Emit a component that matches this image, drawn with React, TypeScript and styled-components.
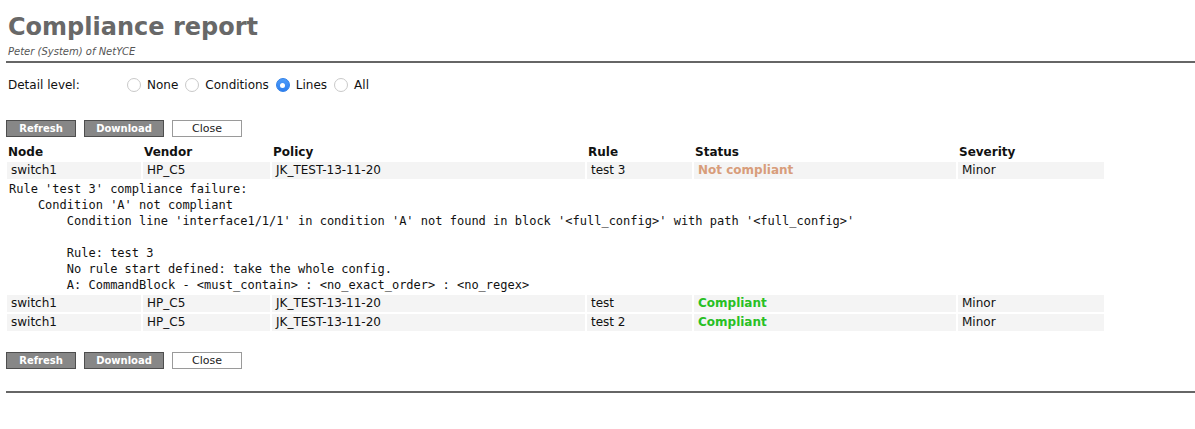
import styled, { createGlobalStyle } from "styled-components";

const GlobalStyle = createGlobalStyle`
    body {
        margin: 0;
        background: #ffffff;
        font-family: Verdana, "DejaVu Sans", sans-serif;
        color: #111;
    }
`

const Page = styled.div`
    padding: 0 0 0 6px;
`

const Title = styled.h1`
    margin: 0;
    padding: 13px 0 0 2px;
    font-size: 24px;
    line-height: 29px;
    font-weight: bold;
    color: #686868;
`

const Subtitle = styled.div`
    padding: 3px 0 0 2px;
    font-size: 10px;
    line-height: 13px;
    font-style: italic;
    color: #555;
`

const Rule = styled.hr`
    margin: 3px 0 0;
    border: none;
    height: 2px;
    background: #666;
`

const DetailRow = styled.div`
    display: flex;
    align-items: center;
    margin-top: 14px;
    padding-left: 2px;
    font-size: 12px;
    height: 16px;
`

const DetailLabel = styled.span`
    width: 119px;
`

const RadioItem = styled.label`
    display: flex;
    align-items: center;
    gap: 6px;
    margin-right: 7px;
`

const Radio = styled.span<{ $checked?: boolean }>`
    box-sizing: border-box;
    width: 14px;
    height: 14px;
    border-radius: 50%;
    border: 1px solid ${p => (p.$checked ? "#2f7fe8" : "#c9c9c9")};
    background: ${p => (p.$checked ? "linear-gradient(#4d9bf8, #2d7ff0)" : "#fff")};
    display: flex;
    align-items: center;
    justify-content: center;

    &::after {
        content: "";
        width: 5px;
        height: 5px;
        border-radius: 50%;
        background: ${p => (p.$checked ? "#fff" : "transparent")};
    }
`

const Buttons = styled.div<{ $top: number }>`
    display: flex;
    gap: 8px;
    margin-top: ${p => p.$top}px;
`

const Button = styled.button<{ $primary?: boolean; $width: number }>`
    box-sizing: border-box;
    width: ${p => p.$width}px;
    height: 17px;
    padding: 0;
    font-family: Verdana, "DejaVu Sans", sans-serif;
    font-size: ${p => (p.$primary ? "10px" : "11px")};
    line-height: 15px;
    font-weight: ${p => (p.$primary ? "bold" : "normal")};
    color: ${p => (p.$primary ? "#fff" : "#222")};
    background: ${p => (p.$primary ? "#878787" : "#fff")};
    border: 1px solid ${p => (p.$primary ? "#4e4e4e" : "#9a9a9a")};
    border-radius: 0;
`

const Table = styled.table`
    border-collapse: separate;
    border-spacing: 2px;
    table-layout: fixed;
    width: 1101px;
    margin: 5px 0 0 -1px;
    font-size: 12px;
`

const Th = styled.th`
    text-align: left;
    font-weight: bold;
    padding: 0 1px;
    height: 16px;
    line-height: 16px;
`

const Td = styled.td<{ $status?: "ok" | "fail" }>`
    background: #f4f4f4;
    padding: 0 4px;
    height: 17px;
    line-height: 17px;
    white-space: nowrap;
    font-weight: ${p => (p.$status ? "bold" : "normal")};
    color: ${p => (p.$status === "ok" ? "#27c024" : p.$status === "fail" ? "#d89d7b" : "#111")};
`

const DetailCell = styled.td`
    padding: 0 2px;
`

const Pre = styled.pre`
    margin: 0;
    font-family: "DejaVu Sans Mono", Menlo, monospace;
    font-size: 12px;
    line-height: 16px;
    color: #111;
`

const BottomRule = styled.hr`
    margin: 22px 0 0;
    border: none;
    height: 2px;
    background: #666;
`

type Row = {
    node: string
    vendor: string
    policy: string
    rule: string
    compliant: boolean
    severity: string
    detail?: string
}

const rows: Row[] = [
    {
        node: "switch1", vendor: "HP_C5", policy: "JK_TEST-13-11-20", rule: "test 3", compliant: false, severity: "Minor",
        detail: [
            "Rule 'test 3' compliance failure:",
            "    Condition 'A' not compliant",
            "        Condition line 'interface1/1/1' in condition 'A' not found in block '<full_config>' with path '<full_config>'",
            "",
            "        Rule: test 3",
            "        No rule start defined: take the whole config.",
            "        A: CommandBlock - <must_contain> : <no_exact_order> : <no_regex>",
        ].join("\n"),
    },
    { node: "switch1", vendor: "HP_C5", policy: "JK_TEST-13-11-20", rule: "test", compliant: true, severity: "Minor" },
    { node: "switch1", vendor: "HP_C5", policy: "JK_TEST-13-11-20", rule: "test 2", compliant: true, severity: "Minor" },
]

const columns = [
    { label: "Node", width: 134 },
    { label: "Vendor", width: 127 },
    { label: "Policy", width: 313 },
    { label: "Rule", width: 105 },
    { label: "Status", width: 262 },
    { label: "Severity", width: 146 },
]

const levels = ["None", "Conditions", "Lines", "All"]

const ActionButtons = ({ top }: { top: number }) => (
    <Buttons $top={top}>
        <Button $primary $width={70}>Refresh</Button>
        <Button $primary $width={80}>Download</Button>
        <Button $width={70}>Close</Button>
    </Buttons>
)

const App = () => {
    return (
        <Page>
            <GlobalStyle />
            <Title>Compliance report</Title>
            <Subtitle>Peter (System) of NetYCE</Subtitle>
            <Rule />

            <DetailRow>
                <DetailLabel>Detail level:</DetailLabel>
                {levels.map(level => (
                    <RadioItem key={level}>
                        <Radio $checked={level === "Lines"} />
                        {level}
                    </RadioItem>
                ))}
            </DetailRow>

            <ActionButtons top={27} />

            <Table>
                <colgroup>
                    {columns.map(c => <col key={c.label} style={{ width: c.width }} />)}
                </colgroup>
                <thead>
                    <tr>
                        {columns.map(c => <Th key={c.label}>{c.label}</Th>)}
                    </tr>
                </thead>
                <tbody>
                    {rows.map((r, i) => (
                        <>
                            <tr key={`row-${i}`}>
                                <Td>{r.node}</Td>
                                <Td>{r.vendor}</Td>
                                <Td>{r.policy}</Td>
                                <Td>{r.rule}</Td>
                                <Td $status={r.compliant ? "ok" : "fail"}>{r.compliant ? "Compliant" : "Not compliant"}</Td>
                                <Td>{r.severity}</Td>
                            </tr>
                            {r.detail && (
                                <tr key={`detail-${i}`}>
                                    <DetailCell colSpan={6}>
                                        <Pre>{r.detail}</Pre>
                                    </DetailCell>
                                </tr>
                            )}
                        </>
                    ))}
                </tbody>
            </Table>

            <ActionButtons top={19} />
            <BottomRule />
        </Page>
    )
}

export default App;
